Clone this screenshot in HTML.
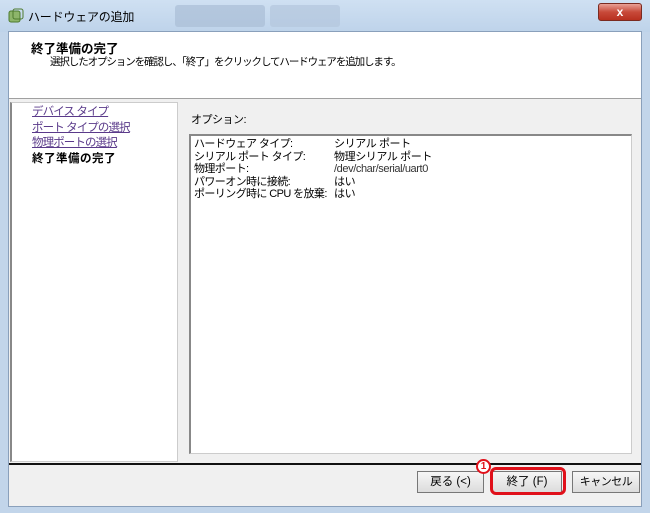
<!DOCTYPE html>
<html><head><meta charset="utf-8"><style>
*{margin:0;padding:0;box-sizing:border-box}
body{width:650px;height:513px;overflow:hidden;background:#c2d5ea;font-family:"Liberation Sans","Noto Sans CJK JP",sans-serif;font-size:11px;color:#000;position:relative}
.abs{position:absolute;white-space:nowrap}
</style></head><body>
<div class="abs" style="left:0;top:0;width:650px;height:32px;background:linear-gradient(#cfe0f2,#bed3ea)"></div>
<div class="abs" style="left:175px;top:5px;width:90px;height:22px;background:#a9bdd6;border-radius:3px;opacity:.7"></div>
<div class="abs" style="left:270px;top:5px;width:70px;height:22px;background:#b3c6dd;border-radius:3px;opacity:.7"></div>
<svg class="abs" style="left:8px;top:8px" width="16" height="16"><rect x="1" y="3" width="11" height="11" rx="2" fill="#8db56a" stroke="#4d7a2e"/><rect x="5" y="1" width="10" height="10" rx="2" fill="none" stroke="#4d7a2e"/></svg>
<div class="abs" style="left:28px;top:8px;font-size:12px;letter-spacing:-0.2px">ハードウェアの追加</div>
<div class="abs" style="left:598px;top:3px;width:44px;height:18px;border-radius:3px;border:1px solid #7a2a20;background:linear-gradient(#e9a095,#c84a3a 50%,#b8301f);color:#fff;font-weight:bold;text-align:center;line-height:16px;font-size:12px">x</div>
<div class="abs" style="left:8px;top:31px;width:634px;height:476px;background:#f0f0f0;border:1px solid #8aa0bb"></div>
<div class="abs" style="left:9px;top:32px;width:632px;height:67px;background:#fff;border-bottom:1px solid #a0a0a0"></div>
<div class="abs" style="left:31px;top:38px;font-weight:bold;font-size:12.5px">終了準備の完了</div>
<div class="abs" style="left:50px;top:54px;font-size:10.5px;letter-spacing:-1.1px">選択したオプションを確認し、「終了」をクリックしてハードウェアを追加します。</div>
<div class="abs" style="left:10px;top:102px;width:168px;height:360px;background:#fff;border:1px solid #ccc;border-left:2px solid #888"></div>
<div class="abs" style="left:32px;top:105px;font-size:11.5px;line-height:15.5px;color:#5a3a8a;letter-spacing:-0.9px">
<div style="text-decoration:underline">デバイス タイプ</div>
<div style="text-decoration:underline">ポート タイプの選択</div>
<div style="text-decoration:underline">物理ポートの選択</div>
<div style="color:#000;font-weight:bold;letter-spacing:0.5px">終了準備の完了</div></div>
<div class="abs" style="left:191px;top:111px;font-size:11px;letter-spacing:-0.5px">オプション:</div>
<div class="abs" style="left:189px;top:134px;width:443px;height:320px;background:#fff;border:1px solid #ccc;border-top:2px solid #888;border-left:2px solid #888"></div>
<div class="abs" style="left:194px;top:138px;font-size:11px;line-height:12.5px;letter-spacing:-0.6px">
<div>ハードウェア タイプ:</div><div>シリアル ポート タイプ:</div><div>物理ポート:</div><div>パワーオン時に接続:</div><div>ポーリング時に CPU を放棄:</div></div>
<div class="abs" style="left:334px;top:138px;font-size:11px;line-height:12.5px;letter-spacing:-0.4px">
<div>シリアル ポート</div><div>物理シリアル ポート</div><div style="color:#333">/dev/char/serial/uart0</div><div>はい</div><div>はい</div></div>
<div class="abs" style="left:9px;top:463px;width:632px;height:2px;background:#111"></div>
<div class="abs" style="left:417px;top:471px;width:67px;height:22px;border:1px solid #777;background:linear-gradient(#f6f6f6,#dcdcdc);text-align:center;line-height:20px;font-size:11.5px">戻る (&lt;)</div>
<div class="abs" style="left:492px;top:471px;width:70px;height:22px;border:1px solid #777;background:linear-gradient(#f6f6f6,#dcdcdc);text-align:center;line-height:20px;font-size:11.5px">終了 (F)</div>
<div class="abs" style="left:490px;top:467px;width:76px;height:28px;border:3px solid #e0101a;border-radius:6px"></div>
<div class="abs" style="left:476px;top:459px;width:15px;height:15px;border:2px solid #e0101a;border-radius:50%;background:#fff;color:#e0101a;font-size:10px;font-weight:bold;text-align:center;line-height:11px">1</div>
<div class="abs" style="left:572px;top:471px;width:68px;height:22px;border:1px solid #777;background:linear-gradient(#f6f6f6,#dcdcdc);text-align:center;line-height:20px;font-size:11px;letter-spacing:-0.5px">キャンセル</div>
</body></html>
